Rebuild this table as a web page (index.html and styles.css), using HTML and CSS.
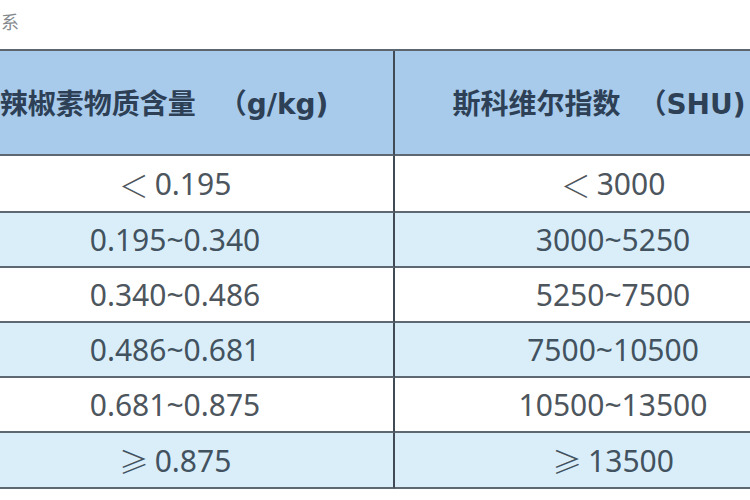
FILE: index.html
```html
<!DOCTYPE html>
<html lang="zh-CN">
<head>
<meta charset="utf-8">
<title>辣椒素物质含量与斯科维尔指数</title>
<link rel="stylesheet" href="styles.css">
</head>
<body>
<div class="caption">系</div>
<div class="grid">
  <div class="cell head first">辣椒素物质含量<span class="lat lat-l">（g/kg)</span></div>
  <div class="cell head">斯科维尔指数<span class="lat lat-r">（SHU)</span></div>

  <div class="cell first r1"><span class="sym">＜</span>0.195</div>
  <div class="cell r1"><span class="sym">＜</span>3000</div>

  <div class="cell first alt">0.195~0.340</div>
  <div class="cell alt">3000~5250</div>

  <div class="cell first">0.340~0.486</div>
  <div class="cell">5250~7500</div>

  <div class="cell first alt">0.486~0.681</div>
  <div class="cell alt">7500~10500</div>

  <div class="cell first">0.681~0.875</div>
  <div class="cell">10500~13500</div>

  <div class="cell first alt last"><span class="sym">≥</span>0.875</div>
  <div class="cell alt last"><span class="sym">≥</span>13500</div>
</div>
</body>
</html>
```
FILE: styles.css
```css
html, body {
  margin: 0;
  padding: 0;
  background: #ffffff;
  overflow: hidden;
}

body {
  width: 750px;
  height: 500px;
  font-family: "Noto Sans", "Noto Sans CJK SC", sans-serif;
}

.caption {
  height: 49px;
  box-sizing: border-box;
  padding-top: 10px;
  padding-left: 1px;
  font-family: "Noto Sans CJK SC", sans-serif;
  font-size: 18px;
  line-height: 22px;
  color: #85898d;
}

.grid {
  display: grid;
  grid-template-columns: 438px 436px;
  grid-template-rows: 105px 57px 55px 55px 55px 55px 56px;
  width: 874px;
  margin-left: -43px;
  border-top: 2px solid #5c6670;
}

.cell {
  box-sizing: border-box;
  display: flex;
  align-items: center;
  justify-content: center;
  border-bottom: 2px solid #5e6872;
  font-size: 30px;
  color: #4d555d;
  background: #ffffff;
  white-space: nowrap;
}

.first {
  border-right: 2px solid #414b55;
}

.alt {
  background: #daeefa;
  color: #42525f;
}

.head {
  background: #a8cbec;
  color: #2d4055;
  font-family: "Noto Sans CJK SC", sans-serif;
  font-weight: 700;
  font-size: 28px;
  padding-right: 28px;
  padding-bottom: 2px;
}

.head.first {
  padding-right: 22px;
}

.lat {
  font-family: "DejaVu Sans", "Noto Sans CJK SC", sans-serif;
  font-weight: 700;
  font-size: 28px;
}

.lat-l {
  margin-left: 23px;
}

.lat-r {
  margin-left: 18px;
}

.sym {
  font-family: "Noto Sans CJK SC", sans-serif;
  font-weight: 300;
  width: 36px;
  text-align: left;
}
```
